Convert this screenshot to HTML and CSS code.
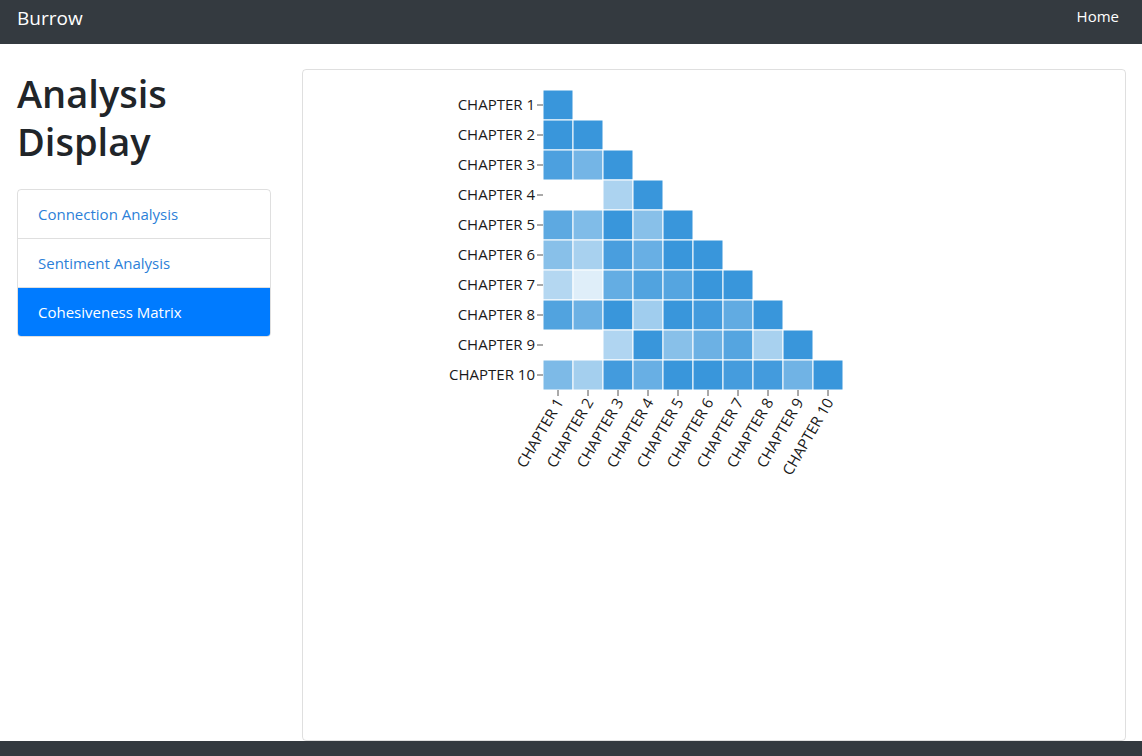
FILE: index.html
```html
<!DOCTYPE html>
<html lang="en">
<head>
    <meta charset="UTF-8">
    <meta name="viewport" content="width=device-width, initial-scale=1.0">
    <title>Burrow - Analysis Display</title>
    <link rel="stylesheet" href="styles.css">
</head>
<body>
    <nav class="navbar">
        <a href="#" class="navbar-brand">Burrow</a>
        <a href="#" class="nav-link">Home</a>
    </nav>

    <div class="main">
        <div class="sidebar">
            <h1>Analysis Display</h1>
            <div class="list-group">
                <a href="#" class="list-group-item">Connection Analysis</a>
                <a href="#" class="list-group-item">Sentiment Analysis</a>
                <a href="#" class="list-group-item active">Cohesiveness Matrix</a>
            </div>
        </div>

        <div class="card">
            <div class="card-body">
                <svg id="matrix" width="560" height="420"></svg>
            </div>
        </div>
    </div>

    <footer class="footer"></footer>

    <script>
    // lower triangle of chapter cohesiveness, null = no data
    const cohesion = [
        [1],
        [1, 1],
        [0.9, 0.7, 1],
        [null, null, 0.42, 1],
        [0.82, 0.64, 1, 0.6, 1],
        [0.6, 0.44, 0.92, 0.76, 1, 1],
        [0.38, 0.16, 0.78, 0.88, 0.86, 1, 1],
        [0.88, 0.74, 1, 0.48, 1, 0.95, 0.8, 1],
        [null, null, 0.4, 1, 0.6, 0.74, 0.86, 0.44, 1],
        [0.66, 0.46, 0.95, 0.76, 1, 1, 0.94, 0.95, 0.72, 1]
    ];

    document.addEventListener("DOMContentLoaded", function() {
        drawMatrix(cohesion);
    });

    function drawMatrix(data) {
        const svg = document.getElementById("matrix");
        const size = 30;
        const left = 220;
        const top = 0;
        let html = "";

        data.forEach((row, i) => {
            const y = top + i * size;
            row.forEach((value, j) => {
                if (value === null) return;
                html += `<rect class="cell" x="${left + j * size}" y="${y}" width="${size}" height="${size}" fill-opacity="${value}"></rect>`;
            });
            // y axis tick + label
            html += `<line class="tick" x1="${left - 6}" x2="${left}" y1="${y + size / 2}" y2="${y + size / 2}"></line>`;
            html += `<text class="label" x="${left - 8}" y="${y + size / 2}" dy="0.35em" text-anchor="end">CHAPTER ${i + 1}</text>`;
        });

        // x axis
        const axisY = top + data.length * size;
        data.forEach((row, j) => {
            const cx = left + j * size + size / 2;
            html += `<line class="tick" x1="${cx}" x2="${cx}" y1="${axisY}" y2="${axisY + 6}"></line>`;
            html += `<text class="label" text-anchor="end" transform="translate(${cx + 6},${axisY + 12}) rotate(-60)">CHAPTER ${j + 1}</text>`;
        });

        svg.innerHTML = html;
    }
    </script>
</body>
</html>
```

FILE: styles.css
```css
body {
    margin: 0;
    font-family: "Open Sans", "Noto Sans", sans-serif;
    font-size: 16px;
    line-height: 1.5;
    color: #212529;
    background: #fff;
    height: 756px;
    overflow: hidden;
}
a {
    text-decoration: none;
}
.navbar {
    height: 44px;
    background-color: #343a40;
    display: flex;
    justify-content: space-between;
    align-items: center;
    padding: 0 16px 0 17px;
}
.navbar-brand {
    color: #fff;
    font-size: 19px;
    margin-top: -7px;
}
.nav-link {
    color: #fff;
    font-size: 15px;
    padding: 0 7px;
    margin-top: -11px;
}
.main {
    display: flex;
    gap: 31px;
    padding: 25px 16px 0 17px;
    height: 697px;
    box-sizing: border-box;
}
.sidebar {
    width: 254px;
    flex-shrink: 0;
}
h1 {
    font-size: 38px;
    font-weight: 600;
    line-height: 48px;
    margin: 0 0 24px;
}
.list-group {
    display: flex;
    flex-direction: column;
    border: 1px solid rgba(0,0,0,.125);
    border-radius: 4px;
    overflow: hidden;
}
.list-group-item {
    display: block;
    padding: 12px 20px;
    line-height: 24px;
    font-size: 15px;
    color: #2c7fd8;
    border-bottom: 1px solid rgba(0,0,0,.125);
}
.list-group-item:last-child {
    border-bottom: none;
}
.list-group-item.active {
    background-color: #007bff;
    color: #fff;
}
.card {
    flex: 1;
    border: 1px solid rgba(0,0,0,.125);
    border-radius: 4px;
    box-sizing: border-box;
    height: 672px;
}
.card-body {
    padding: 20px;
}
#matrix {
    display: block;
}
.cell {
    fill: #3996db;
    stroke: #fff;
    stroke-width: 1;
}
.tick {
    stroke: #555;
    stroke-width: 1;
}
.label {
    font-family: "Open Sans", "Noto Sans", sans-serif;
    font-size: 15px;
    fill: #1a1a1a;
}
.footer {
    height: 15px;
    background-color: #343a40;
}
```
